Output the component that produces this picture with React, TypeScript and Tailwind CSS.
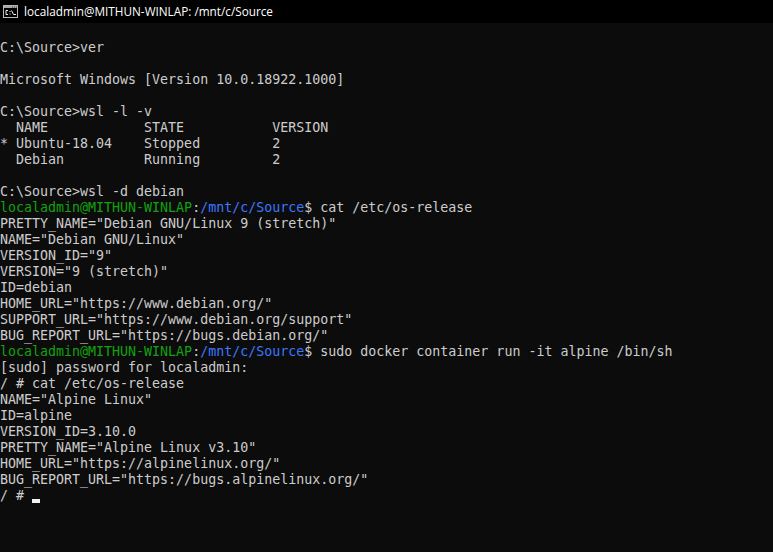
import React from 'react';

type Line = string | { user: string; path: string; cmd: string };

const PROMPT_USER = 'localadmin@MITHUN-WINLAP';

const LINES: Line[] = [
  '',
  'C:\\Source>ver',
  '',
  'Microsoft Windows [Version 10.0.18922.1000]',
  '',
  'C:\\Source>wsl -l -v',
  '  NAME            STATE           VERSION',
  '* Ubuntu-18.04    Stopped         2',
  '  Debian          Running         2',
  '',
  'C:\\Source>wsl -d debian',
  { user: PROMPT_USER, path: '/mnt/c/Source', cmd: ' cat /etc/os-release' },
  'PRETTY_NAME="Debian GNU/Linux 9 (stretch)"',
  'NAME="Debian GNU/Linux"',
  'VERSION_ID="9"',
  'VERSION="9 (stretch)"',
  'ID=debian',
  'HOME_URL="https://www.debian.org/"',
  'SUPPORT_URL="https://www.debian.org/support"',
  'BUG_REPORT_URL="https://bugs.debian.org/"',
  { user: PROMPT_USER, path: '/mnt/c/Source', cmd: ' sudo docker container run -it alpine /bin/sh' },
  '[sudo] password for localadmin:',
  '/ # cat /etc/os-release',
  'NAME="Alpine Linux"',
  'ID=alpine',
  'VERSION_ID=3.10.0',
  'PRETTY_NAME="Alpine Linux v3.10"',
  'HOME_URL="https://alpinelinux.org/"',
  'BUG_REPORT_URL="https://bugs.alpinelinux.org/"',
];

function ConsoleIcon() {
  return (
    <svg width="15" height="13" viewBox="0 0 15 13" className="shrink-0">
      <rect x="0.5" y="0.5" width="14" height="12" fill="#000" stroke="#b8b8b8" />
      <rect x="1" y="1" width="13" height="2" fill="#a8a8a8" />
      <path d="M9 2H10M11 2H12M13 2H14" stroke="#333" fill="none" />
      <path d="M5 5.5H3V9.5H5M7 6V7M7 8.5V9.5M8.5 5.5L10.5 9.5M10.5 9.5H13" stroke="#f0f0f0" fill="none" />
    </svg>
  );
}

export default function App() {
  return (
    <div className="w-[773px] h-[552px] overflow-hidden bg-[#0c0c0c] flex flex-col">
      {/* Title bar */}
      <div className="h-[23px] bg-black flex items-center pl-[3px] gap-[6px] shrink-0">
        <ConsoleIcon />
        <span className="text-white text-[11.75px] font-['Open_Sans','Noto_Sans',sans-serif]">
          localadmin@MITHUN-WINLAP: /mnt/c/Source
        </span>
      </div>

      {/* Terminal */}
      <div className="pt-px font-['DejaVu_Sans_Mono',monospace] text-[13.3px] leading-[16px] text-[#cccccc] whitespace-pre">
        {LINES.map((line, i) =>
          typeof line === 'string' ? (
            <div key={i} className="h-4">{line}</div>
          ) : (
            <div key={i} className="h-4">
              <span className="text-[#13a10e]">{line.user}</span>
              :
              <span className="text-[#3b78ff]">{line.path}</span>
              ${line.cmd}
            </div>
          )
        )}
        <div className="h-4 flex">
          <span>/ # </span>
          <span className="w-2 h-[4px] bg-[#f2f2f2] mt-[11px]" />
        </div>
      </div>
    </div>
  );
}
